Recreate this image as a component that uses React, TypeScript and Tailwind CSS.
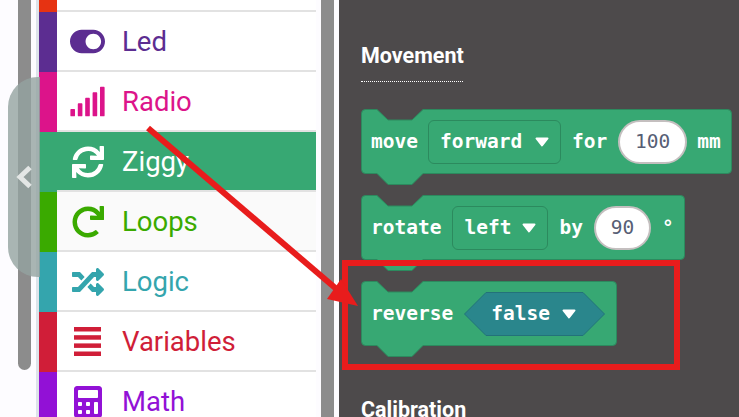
import React from "react";
import { FaCalculator, FaRandom, FaRedo, FaSignal, FaSync, FaToggleOn } from "react-icons/fa";

function BarsIcon() {
  return (
    <svg width="27" height="29" viewBox="0 0 27 29" fill="currentColor">
      <rect y="0" width="27" height="4.5" />
      <rect y="8.2" width="27" height="4.5" />
      <rect y="16.4" width="27" height="4.5" />
      <rect y="24.5" width="27" height="4.5" />
    </svg>
  );
}

const rows = [
  { name: "Led", text: "text-[#5c2d91]", side: "bg-[#5c2d91]", bg: "bg-white", icon: <FaToggleOn className="text-[35px]" /> },
  { name: "Radio", text: "text-[#dc148a]", side: "bg-[#dc148a]", bg: "bg-white", icon: <FaSignal className="text-[37px]" /> },
  { name: "Ziggy", text: "text-white", side: "bg-[#37a873]", bg: "bg-[#37a873]", icon: <FaSync className="text-[32px]" /> },
  { name: "Loops", text: "text-[#3aaa00]", side: "bg-[#3aaa00]", bg: "bg-[#fafafa]", icon: <FaRedo className="text-[32px]" /> },
  { name: "Logic", text: "text-[#34a5ad]", side: "bg-[#34a5ad]", bg: "bg-white", icon: <FaRandom className="text-[32px]" /> },
  { name: "Variables", text: "text-[#d01e38]", side: "bg-[#d01e38]", bg: "bg-white", icon: <BarsIcon /> },
  { name: "Math", text: "text-[#9211d6]", side: "bg-[#9211d6]", bg: "bg-white", icon: <FaCalculator className="text-[32px]" /> },
];

function Caret() {
  return (
    <svg width="14" height="10" viewBox="0 0 14 10" className="shrink-0">
      <path d="M1.5 1.5 H12.5 L7 8.5 Z" fill="#fff" stroke="#fff" strokeWidth="2" strokeLinejoin="round" />
    </svg>
  );
}

function Block({ width, children }: { width: number; children: React.ReactNode }) {
  const w = width - 0.5;
  const d = `M4.5 .5 H16 L27 11 H51 L62 .5 H${w - 4} Q${w} .5 ${w} 4.5 V60.5 Q${w} 64.5 ${w - 4} 64.5 H62 L51 75.5 H27 L16 64.5 H4.5 Q.5 64.5 .5 60.5 V4.5 Q.5 .5 4.5 .5 Z`;
  return (
    <div className="relative h-[65px] shrink-0" style={{ width }}>
      <svg className="absolute left-0 top-0 overflow-visible" width={width} height="76">
        <path d={d} fill="#37a873" stroke="#2c8a5e" strokeWidth="1" />
      </svg>
      <div className="relative flex h-full items-center pl-[10px] pt-[1px] font-['DejaVu_Sans_Mono',monospace] text-[19.5px] font-bold text-white">
        {children}
      </div>
    </div>
  );
}

function Dropdown({ label, width }: { label: string; width: number }) {
  return (
    <div
      className="flex h-[44px] items-center justify-between rounded-[6px] border border-[#2c8a5e] px-[11px]"
      style={{ width }}
    >
      <span>{label}</span>
      <Caret />
    </div>
  );
}

function Pill({ value, width }: { value: string; width: number }) {
  return (
    <div
      className="flex h-[44px] items-center justify-center rounded-[22px] border-2 border-[#c4bfbf] bg-white font-normal text-[#575e75]"
      style={{ width }}
    >
      {value}
    </div>
  );
}

export default function App() {
  return (
    <div className="relative flex h-[417px] w-[739px] overflow-hidden bg-[#fdfcff] font-['Roboto',sans-serif]">
      {/* left scrollbar */}
      <div className="ml-[18px] h-[370px] w-[13px] shrink-0 rounded-b-[7px] bg-[#8c8c8c]" />
      <div className="ml-[5px] w-[3px] shrink-0 bg-[#dde3ea]" />

      {/* toolbox */}
      <div className="-mt-[48px] w-[277px] shrink-0">
        <div className="flex h-[60px] bg-white">
          <div className="w-[18px] bg-[#e63312]" />
          <div className="flex-1 border-b-2 border-[#e2e2e2]" />
        </div>
        {rows.map((row) => (
          <div key={row.name} className={`flex h-[60px] ${row.bg} ${row.text}`}>
            <div className={`w-[18px] shrink-0 ${row.side}`} />
            <div className="flex flex-1 items-center border-b-2 border-[#e2e2e2] pt-[1px]">
              <div className="flex w-[61px] justify-center">{row.icon}</div>
              <span className="ml-[4px] text-[27.5px] leading-none">{row.name}</span>
            </div>
          </div>
        ))}
      </div>

      {/* right scrollbar */}
      <div className="ml-[5px] w-[13px] shrink-0 bg-[#8c8c8c]" />
      <div className="ml-[5px] flex min-w-0 flex-1 flex-col bg-[#4d4a4b] pl-[22px]">
        <div className="ml-[27px] h-[3px] w-[26px] rounded-b-[3px] bg-[#37a873]" />
        <h3 className="mt-[44px] w-[102px] whitespace-nowrap text-[21.5px] font-bold leading-[24px] text-white">Movement</h3>
        <div className="mt-[13px] w-[102px] border-b border-dotted border-white" />
        <div className="mt-[27px]">
          <Block width={371}>
            <span>move</span>
            <div className="ml-[10px]"><Dropdown label="forward" width={133} /></div>
            <span className="ml-[11px]">for</span>
            <div className="ml-[11px]"><Pill value="100" width={69} /></div>
            <span className="ml-[10px]">mm</span>
          </Block>
        </div>
        <div className="mt-[21px]">
          <Block width={324}>
            <span>rotate</span>
            <div className="ml-[11px]"><Dropdown label="left" width={96} /></div>
            <span className="ml-[11px]">by</span>
            <div className="ml-[11px]"><Pill value="90" width={57} /></div>
            <span className="ml-[11px]">°</span>
          </Block>
        </div>
        <div className="mt-[21px]">
          <Block width={256}>
            <span>reverse</span>
            <div className="relative ml-[11px] flex h-[44px] w-[141px] items-center pl-[27px]">
              <svg className="absolute left-0 top-0" width="141" height="44">
                <path d="M.5 22 L22 .5 H119 L140.5 22 L119 43.5 H22 Z" fill="#2a868c" stroke="#23727a" />
              </svg>
              <span className="relative">false</span>
              <div className="relative ml-[12px]"><Caret /></div>
            </div>
          </Block>
        </div>
        <h3 className="mt-[52px] whitespace-nowrap text-[21.5px] font-bold leading-[24px] text-white">Calibration</h3>
      </div>

      {/* collapse handle */}
      <div className="absolute left-[8px] top-[77px] flex h-[200px] w-[32px] items-center rounded-l-[30px] bg-[#93a3a0]/80 pl-[8px]">
        <svg width="16" height="24" viewBox="0 0 16 24" fill="none" stroke="#e3e6e5" strokeWidth="5">
          <path d="M14 2.5 L4 12 L14 21.5" />
        </svg>
      </div>

      {/* annotation */}
      <div className="absolute left-[342px] top-[260px] h-[110px] w-[338px] border-[6px] border-[#e81c1c]" />
      <svg className="absolute left-0 top-0" width="739" height="417">
        <line x1="148" y1="128" x2="340" y2="292" stroke="#e81c1c" strokeWidth="6" />
        <polygon points="358,306 341,279 327,299" fill="#e81c1c" />
      </svg>
    </div>
  );
}
